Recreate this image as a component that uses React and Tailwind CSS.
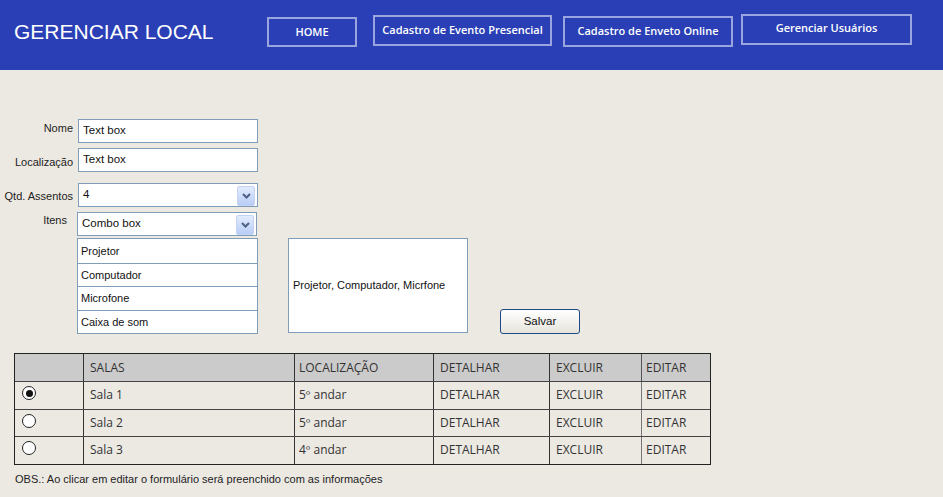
import React from "react"

const sketch = { fontFamily: '"Open Sans", "Liberation Sans", sans-serif' }
const tahoma = { fontFamily: '"Liberation Sans", "DejaVu Sans", sans-serif' }

const navItems = [
  { label: "HOME", cls: "w-[90px] h-[30px] mt-[3px]" },
  { label: "Cadastro de Evento Presencial", cls: "w-[179px] h-[31px] ml-[16px] mt-[1px]" },
  { label: "Cadastro de Enveto Online", cls: "w-[170px] h-[31px] ml-[11px] mt-[2px]" },
  { label: "Gerenciar Usuários", cls: "w-[171px] h-[31px] ml-[8px] pb-[3px]" },
]

const rooms = [
  { name: "Sala 1", loc: "5º andar", checked: true },
  { name: "Sala 2", loc: "5º andar", checked: false },
  { name: "Sala 3", loc: "4º andar", checked: false },
]

const Chevron = () => (
  <div className="absolute right-[2px] top-[2px] w-[18px] h-[20px] rounded-[2px] border border-[#c4d3f3] bg-gradient-to-b from-[#e3ecfd] to-[#b9cdf6] flex items-center justify-center">
    <svg width="9" height="6" viewBox="0 0 9 6">
      <path d="M1 1 L4.5 4.5 L8 1" stroke="#4d6185" strokeWidth="2" fill="none" />
    </svg>
  </div>
)

const Field = ({ label, value, select, labelCls = "" }) => (
  <div className="flex">
    <div className={"w-[78px] pr-[5px] text-right text-[11px] text-[#222] whitespace-nowrap " + labelCls}>
      {label}
    </div>
    <div className="relative w-[180px] h-[24px] bg-white border border-[#7f9db9] px-[4px] flex items-center text-[11.5px] text-[#111]">
      {value}
      {select && <Chevron />}
    </div>
  </div>
)

const App = () => {
  return (
    <div className="min-h-screen bg-[#ece9e3]" style={tahoma}>
      {/* header */}
      <div className="h-[70px] bg-[#2a3fb5] flex items-start pl-[14px]">
        <h1 className="text-[21px] text-white mt-[21px] leading-none w-[253px]" style={{ fontFamily: '"Liberation Sans", Arial, sans-serif' }}>
          GERENCIAR LOCAL
        </h1>
        <div className="flex items-start mt-[14px]">
          {navItems.map((n) => (
            <div
              key={n.label}
              className={"border-2 border-[#9aa5e0] flex items-center justify-center text-white text-[11px] font-semibold whitespace-nowrap " + n.cls}
              style={sketch}
            >
              {n.label}
            </div>
          ))}
        </div>
      </div>

      {/* form */}
      <div className="pt-[49px]">
        <Field label="Nome" value="Text box" labelCls="pt-[1px]" />
        <div className="mt-[5px]">
          <Field label="Localização" value="Text box" labelCls="pt-[6px]" />
        </div>
        <div className="mt-[11px]">
          <Field label="Qtd. Assentos" value="4" select labelCls="pt-[5px] pr-[1px]" />
        </div>
        <div className="mt-[5px] -ml-[1px]">
          <Field label="Itens" value="Combo box" select labelCls="pt-[0px] pr-[10px]" />
        </div>

        <div className="flex items-start mt-[2px] ml-[77px]">
          <div className="w-[181px] border border-[#7f9db9] bg-white text-[11px] text-[#111]">
            {["Projetor", "Computador", "Microfone", "Caixa de som"].map((it, i) => (
              <div
                key={it}
                className={"h-[23.5px] px-[3px] flex items-center " + (i > 0 ? "border-t border-[#7f9db9]" : "")}
              >
                {it}
              </div>
            ))}
          </div>
          <div className="ml-[30px] w-[180px] h-[95px] bg-white border border-[#7f9db9] px-[4px] flex items-center text-[11px] text-[#111]">
            Projetor, Computador, Micrfone
          </div>
          <button className="ml-[32px] mt-[71px] w-[80px] h-[25px] rounded-[3px] border border-[#1c4a86] bg-gradient-to-b from-white to-[#e6e4dc] text-[11.5px] text-[#111]">
            Salvar
          </button>
        </div>
      </div>

      {/* table */}
      <div className="ml-[14px] mt-[19px] w-[697px]" style={sketch}>
        <div className="border border-[#222] text-[12px] text-[#333]">
          <div className="grid grid-cols-[68px_211px_139px_116px_92px_1fr] h-[27px] bg-[#cbcbcb]">
            <div />
            <div className="border-l border-[#333] pl-[6px] flex items-center">SALAS</div>
            <div className="border-l border-[#333] pl-[4px] flex items-center">LOCALIZAÇÃO</div>
            <div className="border-l border-[#333] pl-[6px] flex items-center">DETALHAR</div>
            <div className="border-l border-[#333] pl-[6px] flex items-center">EXCLUIR</div>
            <div className="border-l border-[#555] pl-[4px] flex items-center">EDITAR</div>
          </div>
          {rooms.map((r) => (
            <div key={r.name} className="grid grid-cols-[68px_211px_139px_116px_92px_1fr] h-[27.5px] border-t border-[#444]">
              <div className="flex items-start pl-[7px] pt-[4px]">
                <div className="w-[14px] h-[14px] rounded-full border-[1.5px] border-[#222] bg-white flex items-center justify-center">
                  {r.checked && <div className="w-[7px] h-[7px] rounded-full bg-[#111]" />}
                </div>
              </div>
              <div className="border-l border-[#333] pl-[6px] flex items-center">{r.name}</div>
              <div className="border-l border-[#333] pl-[4px] flex items-center">{r.loc}</div>
              <div className="border-l border-[#333] pl-[6px] flex items-center">DETALHAR</div>
              <div className="border-l border-[#333] pl-[6px] flex items-center">EXCLUIR</div>
              <div className="border-l border-[#777] pl-[4px] flex items-center">EDITAR</div>
            </div>
          ))}
        </div>
        <div className="mt-[6px] ml-[1px] text-[11px] text-[#222]" style={tahoma}>
          OBS.: Ao clicar em editar o formulário será preenchido com as informações
        </div>
      </div>
    </div>
  )
}

export default App
